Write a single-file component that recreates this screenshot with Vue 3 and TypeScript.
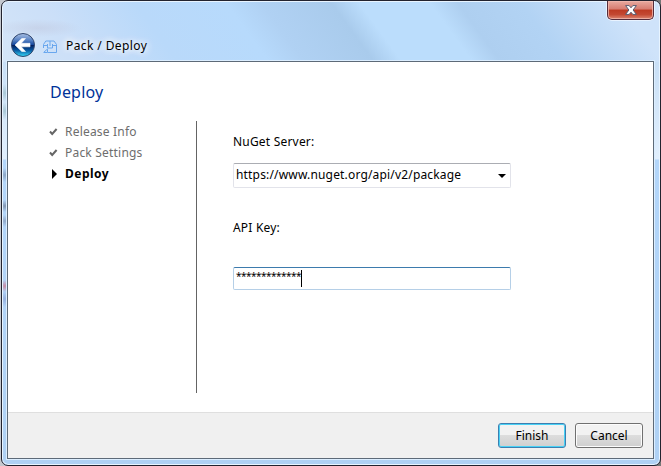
<script setup lang="ts">
import { ref } from 'vue'

interface Step {
  label: string
  done: boolean
}

const steps: Step[] = [
  { label: 'Release Info', done: true },
  { label: 'Pack Settings', done: true },
  { label: 'Deploy', done: false },
]
const server = ref('https://www.nuget.org/api/v2/package')
const maskedKey = ref('*'.repeat(13))
</script>

<template>
  <div class="window">
    <div class="glass">
      <header class="titlebar">
        <svg class="back" viewBox="0 0 26 26" width="26" height="26">
          <defs>
            <linearGradient id="orb" x1="0" y1="0" x2="0" y2="1">
              <stop offset="0" stop-color="#a9c0e4" />
              <stop offset="0.3" stop-color="#547fc2" />
              <stop offset="0.48" stop-color="#174a9f" />
              <stop offset="0.52" stop-color="#02205f" />
              <stop offset="0.72" stop-color="#0756a0" />
              <stop offset="1" stop-color="#35dcfa" />
            </linearGradient>
          </defs>
          <circle cx="13" cy="13" r="12.5" fill="#dce9f8" />
          <circle cx="13" cy="13" r="11.5" fill="url(#orb)" stroke="#30466f" />
          <path d="M5 13 11.8 6.5h3.7L11.3 11.3H20v3.5h-8.7l4.2 4.7h-3.7z" fill="#fff" stroke="#fff" stroke-width=".6" />
        </svg>
        <svg class="box" viewBox="0 0 14 13" width="14" height="13" fill="none" stroke="#69a7ee">
          <path d="M.5 8V4.5L2.8 1H11l2.5 3.5v8H5M.5 5.5h4m5 0h4M4.5 4v4h5V4M7 1v5M1 12.5h3.5V9.2M.5 12.5 4.5 9" />
        </svg>
        <span class="caption">Pack / Deploy</span>
        <button class="close" aria-label="Close">
          <svg viewBox="0 0 12 10" width="12" height="10">
            <path d="M.6.6h3.6L6 2.8 7.8.6h3.6L8.1 5l3.3 4.4H7.8L6 7.2 4.2 9.4H.6L3.9 5z" fill="#fff" stroke="#555b70" stroke-width="1" />
          </svg>
        </button>
      </header>

      <main class="client">
        <div class="page">
          <aside class="side">
            <h1>Deploy</h1>
            <ul>
              <li v-for="step in steps" :key="step.label" :class="{ current: !step.done }">
                <svg v-if="step.done" viewBox="0 0 9 8" width="9" height="8">
                  <path d="M1 3.5 3.2 6 7.6 1" fill="none" stroke="#666" stroke-width="2" />
                </svg>
                <svg v-else viewBox="0 0 9 10" width="9" height="10">
                  <path d="M3 0v10l5-5z" fill="#000" />
                </svg>
                <span>{{ step.label }}</span>
              </li>
            </ul>
          </aside>
          <div class="rule"></div>
          <section class="form">
            <label class="server-label">NuGet Server:</label>
            <div class="field combo">
              <span>{{ server }}</span>
              <svg viewBox="0 0 8 4" width="8" height="4"><path d="M0 0h8L4 4z" /></svg>
            </div>
            <label class="key-label">API Key:</label>
            <div class="field key">
              <span>{{ maskedKey }}</span><i class="caret"></i>
            </div>
          </section>
        </div>
        <footer>
          <button class="btn primary"><span>Finish</span></button>
          <button class="btn"><span>Cancel</span></button>
        </footer>
      </main>
    </div>
  </div>
</template>

<style>
body {
  overflow: hidden;
  background: #8c8c8c;
}
</style>

<style scoped>
* {
  box-sizing: border-box;
}
.window {
  width: 661px;
  height: 466px;
  padding-left: 1px;
  background: linear-gradient(90deg, #c4c8cf 0 50%, #777 50%);
  font: 12px/16px "Noto Sans", "Open Sans", sans-serif;
  color: #000;
}
.glass {
  height: 466px;
  padding: 0 6px 6px 5px;
  border: 1px solid #22232f;
  border-radius: 7px;
  box-shadow: inset 0 0 0 1px #e8f4ff;
  background:
    radial-gradient(ellipse 44px 9px at 36px 27px, #b9b9cf55, transparent),
    linear-gradient(54deg, #d4e5f8 0, #cbdff8 12%, #b9d9fa 25%, #b7dafc 38%, #b0d1f3 43%, #a9cbec 53%, #bbddfc 57%, #bbddfc 67%, #aecff0 71%, #b2d3f4 80%, #cfe3fa 94%) 0 0 / 100% 61px no-repeat,
    radial-gradient(ellipse 8px 6px at 3px 205px, #8195b1, transparent),
    radial-gradient(ellipse 8px 6px at 3px 220px, #91a9c9, transparent),
    radial-gradient(ellipse 8px 6px at 3px 285px, #c68ca5, transparent),
    radial-gradient(ellipse 8px 8px at 3px 298px, #95b0df, transparent),
    radial-gradient(ellipse 8px 7px at 3px 174px, #8ba5c4, transparent),
    radial-gradient(ellipse 8px 9px at 3px 92px, #a9c8d6, transparent),
    radial-gradient(ellipse 8px 9px at 3px 110px, #a9c8d6, transparent),
    linear-gradient(180deg, #c8dff6 60px, #e1effd 158px, #b3d6fa 159px, #afd1f4 100%);
}
.titlebar {
  height: 60px;
  padding: 31px 0 0 3px;
  display: flex;
  align-items: flex-start;
  position: relative;
}
.back {
  flex: none;
}
.box {
  flex: none;
  margin: 8px 0 0 7px;
}
.caption {
  margin: 6px 0 0 9px;
  white-space: nowrap;
  letter-spacing: 0.4px;
  text-shadow: 0 0 6px #fff, 0 0 8px #fff, 0 0 10px #fff;
}
.close {
  position: absolute;
  top: 0;
  right: 0;
  width: 47px;
  height: 19px;
  padding: 4px 0 0;
  display: flex;
  justify-content: center;
  border: 1px solid #542d3c;
  border-top: 0;
  border-radius: 0 0 5px 5px;
  background: linear-gradient(#e8aaa0 0, #d67c70 45%, #bd3a23 50%, #c34832 75%, #dc8671 100%);
  box-shadow: inset 0 0 0 1px #f0b8aecc, 0 1px 0 #e9f3ff, 1px 0 0 #e9f3ff, -1px 0 0 #e9f3ff;
}
.client {
  height: 398px;
  border: 1px solid #5d6a78;
  box-shadow: 0 0 0 1px #dceeff;
  background: #fff;
  display: flex;
  flex-direction: column;
}
.page {
  height: 350px;
  display: flex;
}
.side {
  width: 188px;
  padding: 18px 0 0 42px;
}
h1 {
  margin: 0;
  font-size: 16px;
  line-height: 24px;
  font-weight: 400;
  letter-spacing: 0.2px;
  color: #003399;
}
ul {
  list-style: none;
  margin: 17px 0 0;
  padding: 0;
}
li {
  height: 21px;
  display: flex;
  align-items: center;
  gap: 6px;
  line-height: 21px;
  color: #6d6d6d;
  white-space: nowrap;
  letter-spacing: 0.2px;
}
li svg {
  margin-left: -1px;
  flex: none;
}
li span {
  margin-left: 1px;
}
li.current {
  color: #000;
  font-weight: 700;
  letter-spacing: 0.5px;
}
.rule {
  width: 1px;
  height: 272px;
  margin-top: 59px;
  background: #646464;
}
.form {
  padding: 71px 0 0 36px;
  display: flex;
  flex-direction: column;
}
label {
  height: 18px;
  line-height: 18px;
  letter-spacing: 0.2px;
}
.field {
  width: 278px;
  display: flex;
  align-items: center;
  border-radius: 2px;
  padding-left: 2px;
}
.combo {
  height: 25px;
  margin-top: 12px;
  border: 1px solid #e2e3ea;
  border-top-color: #abadb3;
  justify-content: space-between;
  padding-right: 4px;
}
.combo span {
  letter-spacing: 0.17px;
  margin-top: -1px;
}
.key-label {
  margin-top: 31px;
}
.key {
  height: 23px;
  margin-top: 30px;
  border: 1px solid #b5cfe7;
  border-top-color: #3d7bad;
}
.key span {
  font-size: 10px;
  letter-spacing: -0.5px;
  padding-bottom: 5px;
}
.caret {
  width: 1px;
  height: 17px;
  background: #000;
}
footer {
  height: 46px;
  border-top: 1px solid #dfdfdf;
  background: #f0f0f0;
  display: flex;
  justify-content: flex-end;
  gap: 9px;
  padding: 10px 10px 0 0;
}
.btn {
  width: 68px;
  height: 25px;
  padding: 0;
  font: 12px/16px "Noto Sans", sans-serif;
  color: #000;
  border: 1px solid #707070;
  border-radius: 3px;
  box-shadow: inset 0 0 0 1px #fcfcfc;
  background: linear-gradient(#f2f2f2 0 48%, #dddddd 50%, #cfcfcf);
}
.primary {
  border-color: #3c7fb1;
  box-shadow: inset 0 0 0 1px #48d1f5;
}
</style>
